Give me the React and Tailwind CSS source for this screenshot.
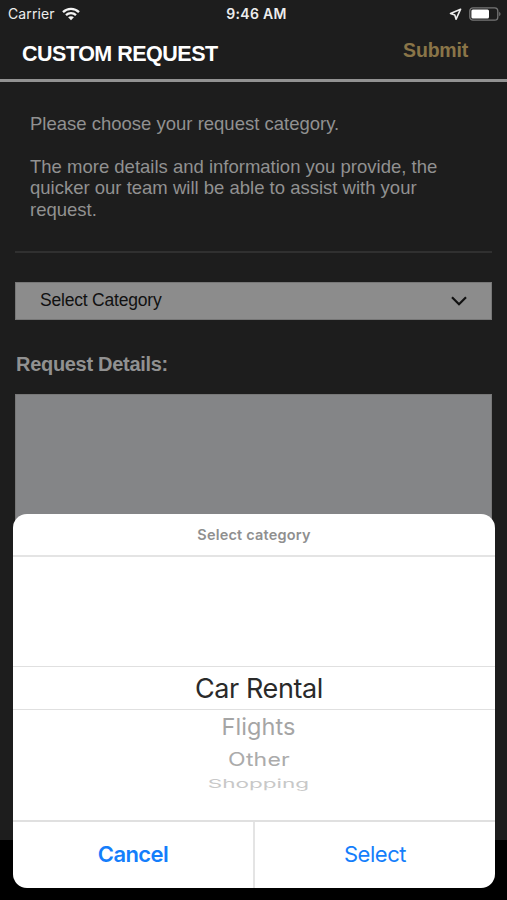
function StatusBar() {
  return (
    <div className="grid h-7 grid-cols-3 items-center font-['Inter',sans-serif] text-[14px] leading-7 text-[#ededed]">
      <div className="flex items-center gap-[7px] pl-[8px]">
        <span className="tracking-[0.1px]">Carrier</span>
        <svg width="18" height="14" viewBox="0 0 18 14" fill="none" stroke="#f4f4f4" strokeWidth="2.3" className="-mt-px">
          <path d="M1 5.1C5.4.7 12.6.7 17 5.1" />
          <path d="M4 8.2c2.8-2.7 7.2-2.7 10 0" />
          <path d="M9 13.2 6.1 10.3c1.6-1.5 4.2-1.5 5.8 0Z" fill="#f4f4f4" stroke="none" />
        </svg>
      </div>
      <span className="pl-[6px] text-center font-semibold tracking-[0.3px]">9:46 AM</span>
      <div className="flex items-center justify-end gap-[7px] pr-[6px]">
        <svg width="13" height="13" viewBox="0 0 13 13" fill="none" stroke="#eeeeee" strokeWidth="1.6" strokeLinejoin="round">
          <path d="M11.6 1.2 1.5 5.4 5.8 6.9 7.1 11.2Z" />
        </svg>
        <svg width="32" height="14" viewBox="0 0 32 14" className="-mt-px">
          <rect x="0.8" y="0.8" width="28" height="12.4" rx="3.2" fill="none" stroke="#767676" strokeWidth="1.3" />
          <rect x="2.4" y="2.4" width="17.6" height="9.2" rx="1.5" fill="#ffffff" />
          <path d="M30.2 4.8c1.8.8 1.8 3.6 0 4.4Z" fill="#767676" />
        </svg>
      </div>
    </div>
  );
}

function PickerSheet() {
  return (
    <div className="absolute top-[514px] left-[13px] flex h-[374px] w-[482px] flex-col overflow-hidden rounded-[14px] bg-white font-['Inter',sans-serif]">
      <div className="h-[43px] shrink-0 border-b-2 border-[#e4e4e4] text-center text-[14.5px] leading-[42px] font-semibold tracking-[0.2px] text-[#8f8f8f]">
        Select category
      </div>
      <div className="flex h-[263px] shrink-0 flex-col items-center pt-[109px]">
        <div className="h-[44px] w-full shrink-0 border-y-[1.5px] border-[#e0e0e0] pl-[10px] text-center text-[27px] leading-[44px] tracking-[-0.4px] text-[#2a2a2a]">
          Car Rental
        </div>
        <div className="h-[34px] shrink-0 pl-[9px] text-[23.5px] leading-[33px] tracking-[0.1px] text-[#a5a5a5]">Flights</div>
        <div className="h-[30px] shrink-0 scale-y-[0.8] pl-[10px] text-[23px] leading-[32px] tracking-[0.2px] text-[#ababab]">Other</div>
        <div className="h-[18px] shrink-0 scale-y-[0.52] pl-[9px] text-[22.5px] leading-[19px] text-[#c8c8c8]">Shopping</div>
      </div>
      <div className="flex flex-1 border-t-2 border-[#e0e0e0] text-[22px] leading-[64px] text-[#147efb]">
        <button className="w-[242px] border-r-2 border-[#e4e4e4] pb-[2px] text-center font-semibold tracking-[-0.6px]">Cancel</button>
        <button className="flex-1 pb-[2px] text-center tracking-[-0.45px]">Select</button>
      </div>
    </div>
  );
}

export default function App() {
  return (
    <div className="relative h-[900px] w-[507px] overflow-hidden bg-black font-['Liberation_Sans',Arial,sans-serif]">
      <div className="flex h-[840px] flex-col bg-[#1d1d1d]">
        <StatusBar />
        <header className="flex h-[54px] shrink-0 items-start justify-between border-b-[3px] border-[#929292] pr-[39px] pl-[22px] font-bold">
          <h1 className="pt-[14px] text-[21.5px] leading-6 tracking-[-0.5px] text-white">CUSTOM REQUEST</h1>
          <button className="pt-[10px] text-[19.5px] leading-6 tracking-[-0.2px] text-[#8a7548]">Submit</button>
        </header>
        <main className="flex flex-1 flex-col px-[15px]">
          <div className="h-[171px] border-b-2 border-[#303030] px-[15px] pt-[31px] text-[18.5px] leading-[21.6px] text-[#919191]">
            <p>Please choose your request category.</p>
            <p className="pt-[21px] whitespace-nowrap">
              The more details and information you provide, the
              <br />
              quicker our team will be able to assist with your
              <br />
              request.
            </p>
          </div>
          <div className="mt-[29px] flex h-[38px] items-center justify-between border border-[#777] bg-[#8c8c8c] pr-[24px] pl-[24px]">
            <span className="-mt-[3px] text-[17.5px] leading-6 tracking-[-0.2px] text-[#111]">Select Category</span>
            <svg width="16" height="10" viewBox="0 0 16 10" fill="none" stroke="#111" strokeWidth="2.2">
              <path d="m1 1.2 7 7 7-7" />
            </svg>
          </div>
          <h2 className="pt-[32px] pl-px text-[20px] leading-6 font-bold tracking-[-0.3px] text-[#919191]">Request Details:</h2>
          <div className="mt-[18px] h-[300px] border border-[#777] bg-[#848587]" />
        </main>
      </div>
      <PickerSheet />
    </div>
  );
}
